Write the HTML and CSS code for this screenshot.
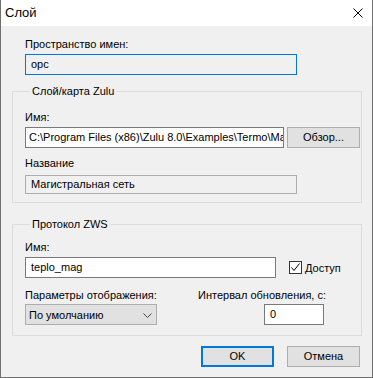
FILE: index.html
```html
<!DOCTYPE html>
<html lang="ru">
<head>
<meta charset="utf-8">
<title>Слой</title>
<link rel="stylesheet" href="styles.css">
</head>
<body>
<div class="window">
  <div class="titlebar">
    <span class="title">Слой</span>
    <span class="close">
      <svg width="10" height="10" viewBox="0 0 10 10"><path d="M0.5 0.5 L9.5 9.5 M9.5 0.5 L0.5 9.5" stroke="#000" stroke-width="1" fill="none"/></svg>
    </span>
  </div>
  <div class="content">
    <div class="top">
      <div class="label">Пространство имен:</div>
      <div class="field readonly focused ns">opc</div>
    </div>
    <fieldset class="group g1">
      <legend>Слой/карта Zulu</legend>
      <div class="label">Имя:</div>
      <div class="row">
        <div class="field path"><span class="clip">C:\Program Files (x86)\Zulu 8.0\Examples\Termo\Ma</span></div>
        <div class="button browse">Обзор...</div>
      </div>
      <div class="label l2">Название</div>
      <div class="field readonly title-field">Магистральная сеть</div>
    </fieldset>
    <fieldset class="group g2">
      <legend>Протокол ZWS</legend>
      <div class="label">Имя:</div>
      <div class="row">
        <div class="field zname">teplo_mag</div>
        <div class="check">
          <span class="box"><svg width="11" height="11" viewBox="0 0 11 11"><path d="M1.5 5.5 L4 8.5 L9.5 1.5" stroke="#000" stroke-width="1" fill="none"/></svg></span>
          <span>Доступ</span>
        </div>
      </div>
      <div class="grid2">
        <div class="label">Параметры отображения:</div>
        <div class="label">Интервал обновления, с:</div>
        <div class="select"><span>По умолчанию</span>
          <svg width="9" height="5" viewBox="0 0 9 5"><path d="M0.5 0.5 L4.5 4.5 L8.5 0.5" stroke="#444" stroke-width="1" fill="none"/></svg>
        </div>
        <div class="num-wrap"><div class="field num">0</div></div>
      </div>
    </fieldset>
    <div class="buttons">
      <div class="button ok">OK</div>
      <div class="button">Отмена</div>
    </div>
  </div>
</div>
</body>
</html>
```
FILE: styles.css
```css
html, body { margin: 0; padding: 0; }
body {
  font-family: "Liberation Sans", Arial, sans-serif;
  font-size: 11px;
  color: #000;
  background: #fff;
}
.window {
  width: 373px;
  height: 378px;
  box-sizing: border-box;
  border-left: 1px solid #707070;
  border-right: 1px solid #707070;
  border-bottom: 1px solid #707070;
  background: #f0f0f0;
}
.titlebar {
  height: 26px;
  background: #fff;
  display: flex;
  align-items: center;
  justify-content: space-between;
}
.title {
  font-size: 13px;
  padding-left: 4px;
  line-height: 26px;
}
.close {
  display: flex;
  width: 10px;
  height: 10px;
  margin-right: 9px;
}
.content {
  padding: 10px 0 0 0;
}
.label {
  line-height: 16px;
  height: 16px;
  white-space: nowrap;
}
.field {
  box-sizing: border-box;
  height: 21px;
  line-height: 19px;
  border: 1px solid #7a7a7a;
  background: #fff;
  padding-left: 5px;
  white-space: nowrap;
  overflow: hidden;
}
.field.readonly {
  background: #f0f0f0;
  border-color: #adadad;
}
.field.focused { border-color: #0078d7; }
.top {
  padding-left: 24px;
}
.top .label { margin-bottom: 2px; }
.ns { width: 272px; }
.group {
  margin: 0 0 0 11px;
  width: 350px;
  box-sizing: border-box;
  border: 1px solid #dcdcdc;
  padding: 10px 1px 8px 12px;
  min-width: 0;
}
.group legend {
  padding: 0 2px;
  margin-left: 5px;
  line-height: 16px;
  height: 16px;
}
.g1 { margin-top: 8px; }
.g2 { margin-top: 13px; padding-top: 7px; padding-bottom: 10px; }
.group .label { margin-bottom: 2px; }
.row {
  display: flex;
  align-items: center;
}
.path { width: 259px; padding-left: 3px; }
.clip { display: block; overflow: hidden; width: 254px; }
.button {
  box-sizing: border-box;
  width: 73px;
  height: 21px;
  line-height: 19px;
  text-align: center;
  background: #e1e1e1;
  border: 1px solid #adadad;
}
.browse { margin-left: 3px; }
.l2 { margin-top: 7px; margin-bottom: 4px !important; }
.title-field { width: 272px; height: 19px; line-height: 17px; }
.zname { width: 251px; }
.check {
  display: flex;
  align-items: center;
  margin-left: 13px;
  height: 16px;
}
.box {
  box-sizing: border-box;
  width: 13px;
  height: 13px;
  border: 1px solid #333;
  background: #fff;
  display: flex;
  margin-right: 3px;
}
.grid2 {
  display: grid;
  grid-template-columns: 173px 127px;
  margin-top: 9px;
}
.grid2 .label { margin-bottom: 1px; }
.select {
  box-sizing: border-box;
  width: 132px;
  height: 21px;
  background: #e1e1e1;
  border: 1px solid #adadad;
  display: flex;
  align-items: center;
  justify-content: space-between;
  padding: 0 4px 0 3px;
}
.select svg { margin-top: 1px; }
.num-wrap { display: flex; justify-content: flex-end; padding-right: 1px; }
.num { width: 60px; }
.buttons {
  display: flex;
  justify-content: flex-end;
  gap: 13px;
  margin-top: 10px;
  padding-right: 12px;
}
.button.ok {
  border: 2px solid #0078d7;
  line-height: 17px;
}
```
